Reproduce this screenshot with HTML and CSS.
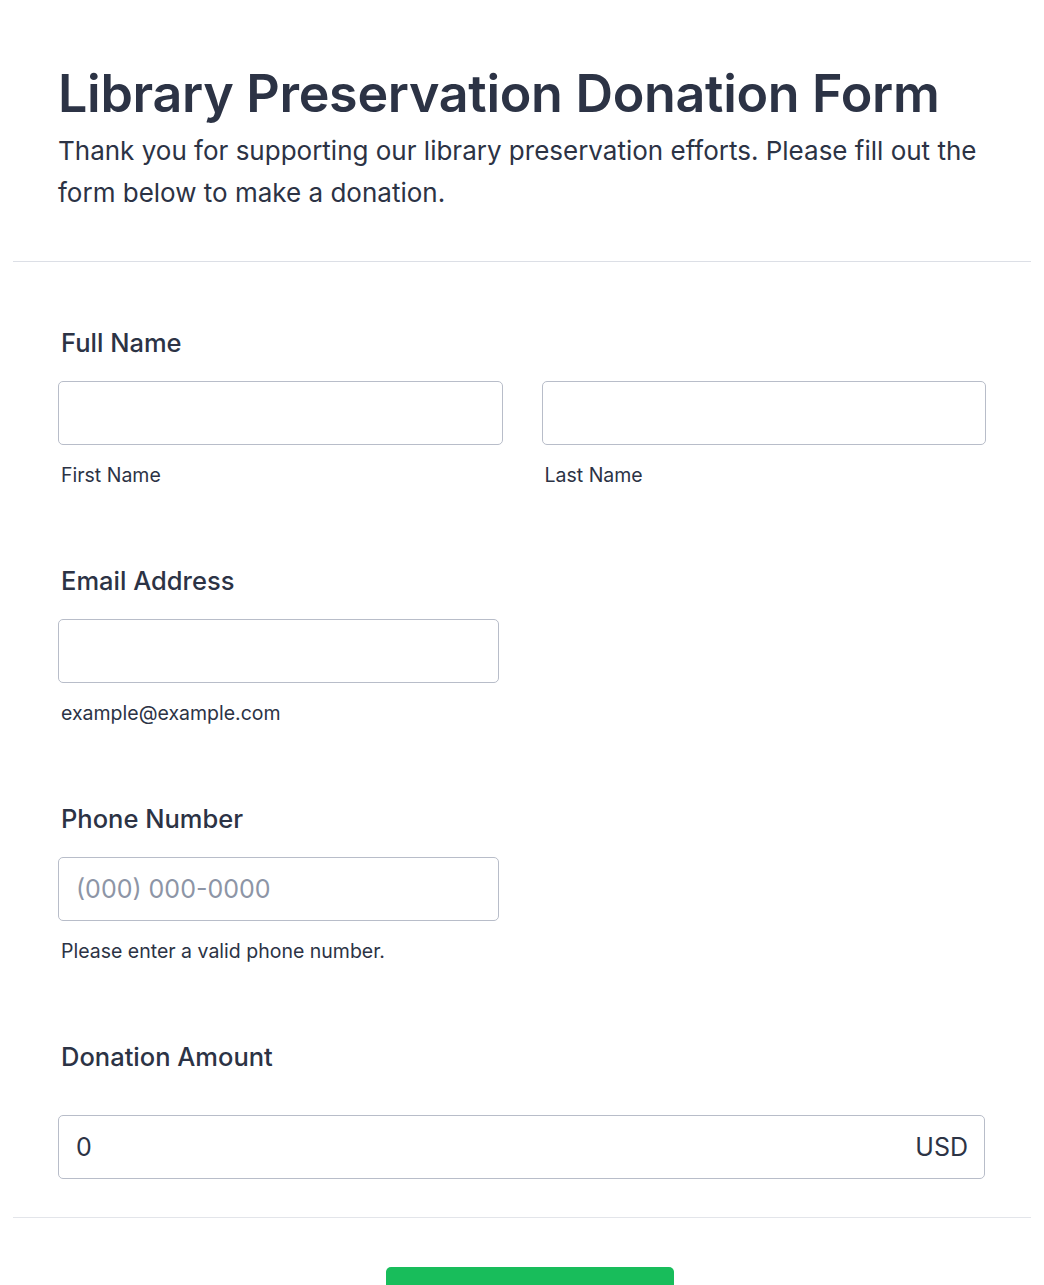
FILE: index.html
```html
<!DOCTYPE html>
<html lang="en">
<head>
    <meta charset="UTF-8">
    <meta name="viewport" content="width=device-width, initial-scale=1.0">
    <title>Library Preservation Donation Form</title>
    <link rel="stylesheet" href="styles.css">
</head>
<body>
    <form class="form">
        <div class="form-header">
            <h1 class="form-title">Library Preservation Donation Form</h1>
            <p class="form-subtitle">Thank you for supporting our library preservation efforts. Please fill out the form below to make a donation.</p>
        </div>

        <div class="form-body">
            <div class="field">
                <label class="field-label">Full Name</label>
                <div class="name-row">
                    <div class="sub-field">
                        <input class="text-input" type="text" id="firstName">
                        <span class="sub-label">First Name</span>
                    </div>
                    <div class="sub-field">
                        <input class="text-input" type="text" id="lastName">
                        <span class="sub-label">Last Name</span>
                    </div>
                </div>
            </div>

            <div class="field">
                <label class="field-label" for="email">Email Address</label>
                <div class="sub-field half">
                    <input class="text-input" type="email" id="email">
                    <span class="sub-label">example@example.com</span>
                </div>
            </div>

            <div class="field">
                <label class="field-label" for="phone">Phone Number</label>
                <div class="sub-field half">
                    <input class="text-input" type="tel" id="phone" placeholder="(000) 000-0000">
                    <span class="sub-label">Please enter a valid phone number.</span>
                </div>
            </div>

            <div class="field field-last">
                <label class="field-label label-spaced" for="amount">Donation Amount</label>
                <div class="amount-box">
                    <input class="amount-input" type="text" id="amount" value="0">
                    <span class="currency">USD</span>
                </div>
            </div>
        </div>

        <div class="form-footer">
            <button type="submit" class="submit-btn">Submit</button>
        </div>
    </form>
</body>
</html>
```

FILE: styles.css
```css
body {
    font-family: Inter, "Noto Sans", sans-serif;
    margin: 0;
    color: #2c3345;
    background: #fff;
}
.form {
    padding: 0 13px;
}
.form-header {
    padding: 62px 45px 47px;
    border-bottom: 1px solid #dcdfe6;
}
.form-title {
    margin: 0;
    font-size: 52px;
    font-weight: 600;
    line-height: 64px;
    letter-spacing: -0.3px;
}
.form-subtitle {
    margin: 4px 0 0;
    font-size: 26px;
    line-height: 42px;
    max-width: 940px;
}
.form-body {
    padding: 63px 45px 0;
    border-bottom: 1px solid #e3e5ea;
}
.field {
    padding-bottom: 75px;
}
.field-last {
    padding-bottom: 38px;
}
.field-label {
    display: block;
    font-size: 25.5px;
    font-weight: 500;
    line-height: 36px;
    padding-left: 3px;
    margin-bottom: 20px;
}
.label-spaced {
    margin-bottom: 40px;
}
.name-row {
    display: grid;
    grid-template-columns: 1fr 1fr;
    gap: 39px;
}
.sub-field {
    display: flex;
    flex-direction: column;
}
.half {
    width: 441px;
}
.text-input, .amount-box {
    box-sizing: border-box;
    height: 64px;
    border: 1px solid #b8bdc9;
    border-radius: 5px;
    padding: 0 16px 0 17px;
    font-family: Inter, "Noto Sans", sans-serif;
    font-size: 25px;
    color: #2c3345;
    outline: none;
    background: #fff;
}
.text-input::placeholder {
    color: #8d95a6;
}
.sub-label {
    font-size: 19.5px;
    line-height: 26px;
    padding-left: 3px;
    margin-top: 17px;
}
.amount-box {
    display: flex;
    align-items: center;
    width: 927px;
}
.amount-input {
    flex: 1;
    border: none;
    outline: none;
    padding: 0;
    font-family: Inter, "Noto Sans", sans-serif;
    font-size: 25px;
    color: #2c3345;
    background: transparent;
}
.currency {
    font-size: 25px;
}
.form-footer {
    display: flex;
    justify-content: center;
    padding-top: 49px;
}
.submit-btn {
    width: 288px;
    height: 92px;
    margin-left: 16px;
    border: none;
    border-radius: 5px;
    background: #18bd5b;
    color: #fff;
    font-family: Inter, "Noto Sans", sans-serif;
    font-size: 22px;
    font-weight: 500;
}
```
